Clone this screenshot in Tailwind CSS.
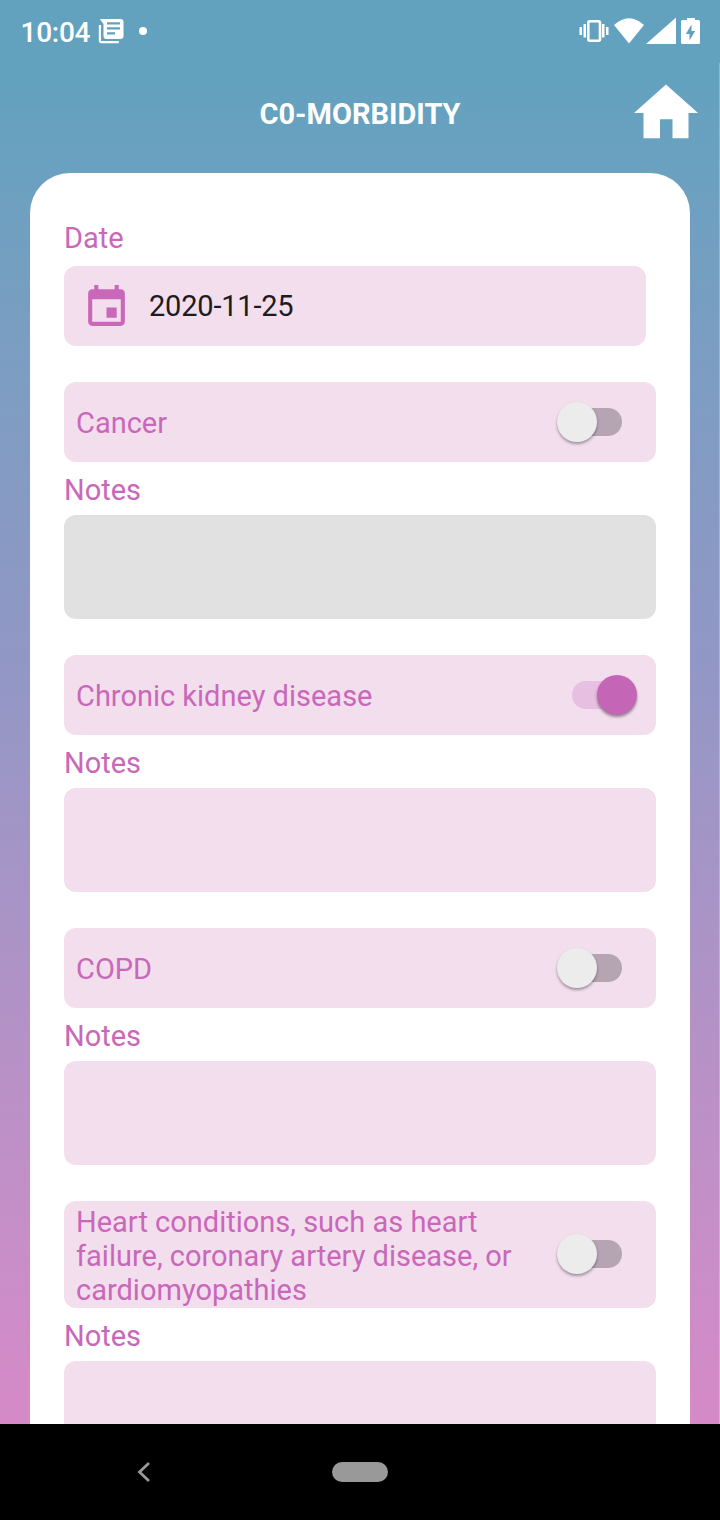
<!DOCTYPE html>
<html lang="en">
<head>
<meta charset="utf-8">
<title>C0-Morbidity</title>
<script src="https://cdn.jsdelivr.net/npm/@tailwindcss/browser@4"></script>
</head>
<body class="w-[720px] h-[1520px] overflow-hidden flex flex-col font-['Roboto',sans-serif] text-[29px] leading-[34px] text-[#c968b9] bg-black">
<div class="relative h-[1424px] shrink-0 overflow-hidden flex flex-col bg-linear-to-b from-[#62a2bf] from-[5%] via-[#9397c5] via-[48%] to-[#d68ac8]">
  <div class="absolute right-0 top-[63px] bottom-0 w-px bg-white/25"></div>
  <div class="h-16 shrink-0 flex bg-[#62a2bf]">
    <svg class="w-[720px] h-16" viewBox="0 0 720 64" fill="#fff">
      <text x="20.500" y="42" font-size="28" font-weight="500" textLength="70">10:04</text>
      <path d="M98.800 25v15.500q0 2.700 2.700 2.700h17.300v-2.200H101V25zM99.800 19h20.700q3 0 3 3v14q0 3-3 3h-14q-3 0-3-3V24zM107 22.300v2.300h13v-2.300zM107 27.300v2.300h13v-2.300zM107 32.300v2.300h8v-2.300z" fill-rule="evenodd"/>
      <circle cx="143" cy="31" r="4"/>
      <path d="M579.500 27h2.500v8h-2.500zM583.500 24h2.500v13.500h-2.500zM602 24h2.500v13.500H602zM606 27h2.500v8H606z"/>
      <rect x="588.300" y="21.300" width="11.700" height="19.400" rx="1.500" fill="none" stroke="#fff" stroke-width="2.600"/>
      <path d="M614 25q15-13.500 30 0l-15 18.500zM646 44h30V17.500zM687 18h8v2h3.500q1.500 0 1.500 1.500v21q0 1.500-1.500 1.500h-16q-1.500 0-1.500-1.500v-21q0-1.500 1.500-1.500h4.500z"/>
      <path d="M691.500 24.500v6.500h3.700l-5.700 9.500V34h-3.700z" fill="#62a2bf"/>
    </svg>
  </div>
  <header class="h-[109px] shrink-0 grid grid-cols-[1fr_auto_1fr] items-start text-white">
    <span></span>
    <h1 class="mt-[33px] font-bold">C0-MORBIDITY</h1>
    <svg class="justify-self-end mr-[22px] mt-5 w-16 h-[56px]" viewBox="634 84 64 56" fill="#fff"><path d="M666 84.500l32 28.500h-9.500v25.300h-16v-19h-12.500v19h-16.500V113H634z"/></svg>
  </header>
  <main class="mx-[30px] flex-1 min-h-0 overflow-hidden rounded-t-[40px] bg-white px-[34px] pt-12">
    <p class="h-[45px]">Date</p>
    <div class="w-[582px] h-20 rounded-xl bg-[#f3deee] flex items-center pl-[18px] text-[#1d1b1e]">
      <svg class="size-[49px] mt-[3px]" viewBox="0 0 24 24" fill="#c968b9"><path d="M17 12h-5v5h5v-5zM16 1v2H8V1H6v2H5c-1.110 0-1.990.9-1.990 2L3 19c0 1.100.89 2 2 2h14c1.100 0 2-.9 2-2V5c0-1.100-.9-2-2-2h-1V1h-2zm3 18H5V8h14v11z"/></svg>
      <span class="ml-[18px] tracking-[-0.2px]">2020-11-25</span>
    </div>
    <section class="mt-9">
      <div class="h-20 rounded-xl bg-[#f3deee] flex items-center justify-between pl-3 pr-[34px]">
        <span class="pt-0.5">Cancer</span>
        <span class="w-[65px] h-10 flex items-center"><span class="size-10 rounded-full bg-[#ececec] shadow-[0_2px_3px_rgba(0,0,0,0.35)] z-10 shrink-0"></span><span class="w-[45px] -ml-5 h-7 rounded-full bg-[#b5a5b2]"></span></span>
      </div>
      <p class="h-[53px] pt-[11px]">Notes</p>
      <div class="h-[104px] rounded-xl bg-[#e1e1e1]"></div>
    </section>
    <section class="mt-9">
      <div class="h-20 rounded-xl bg-[#f3deee] flex items-center justify-between pl-3 pr-[19px]">
        <span class="pt-0.5">Chronic kidney disease</span>
        <span class="w-[65px] h-10 flex items-center"><span class="w-[45px] -mr-5 h-7 rounded-full bg-[#e7bfe1]"></span><span class="size-10 rounded-full bg-[#c565b5] shadow-[0_2px_3px_rgba(0,0,0,0.4)] z-10 shrink-0"></span></span>
      </div>
      <p class="h-[53px] pt-[11px]">Notes</p>
      <div class="h-[104px] rounded-xl bg-[#f3deee]"></div>
    </section>
    <section class="mt-9">
      <div class="h-20 rounded-xl bg-[#f3deee] flex items-center justify-between pl-3 pr-[34px]">
        <span class="pt-0.5">COPD</span>
        <span class="w-[65px] h-10 flex items-center"><span class="size-10 rounded-full bg-[#ececec] shadow-[0_2px_3px_rgba(0,0,0,0.35)] z-10 shrink-0"></span><span class="w-[45px] -ml-5 h-7 rounded-full bg-[#b5a5b2]"></span></span>
      </div>
      <p class="h-[53px] pt-[11px]">Notes</p>
      <div class="h-[104px] rounded-xl bg-[#f3deee]"></div>
    </section>
    <section class="mt-9">
      <div class="h-[107px] rounded-xl bg-[#f3deee] flex items-center justify-between pl-3 pr-[34px]">
        <span class="pt-0.5 whitespace-nowrap">Heart conditions, such as heart<br>failure, coronary artery disease, or<br>cardiomyopathies</span>
        <span class="w-[65px] h-10 mb-px flex items-center"><span class="size-10 rounded-full bg-[#ececec] shadow-[0_2px_3px_rgba(0,0,0,0.35)] z-10 shrink-0"></span><span class="w-[45px] -ml-5 h-7 rounded-full bg-[#b5a5b2]"></span></span>
      </div>
      <p class="h-[53px] pt-[11px]">Notes</p>
      <div class="h-[104px] rounded-xl bg-[#f3deee]"></div>
    </section>
  </main>
</div>
<nav class="h-24 shrink-0 bg-black grid grid-cols-[1fr_56px_1fr] items-center">
  <svg class="ml-[136px] w-4 h-6" viewBox="0 0 16 24" fill="none" stroke="#999" stroke-width="2.800"><path d="M13 3L3.500 12l9.500 9"/></svg>
  <span class="h-5 rounded-full bg-[#999]"></span>
</nav>
</body>
</html>
